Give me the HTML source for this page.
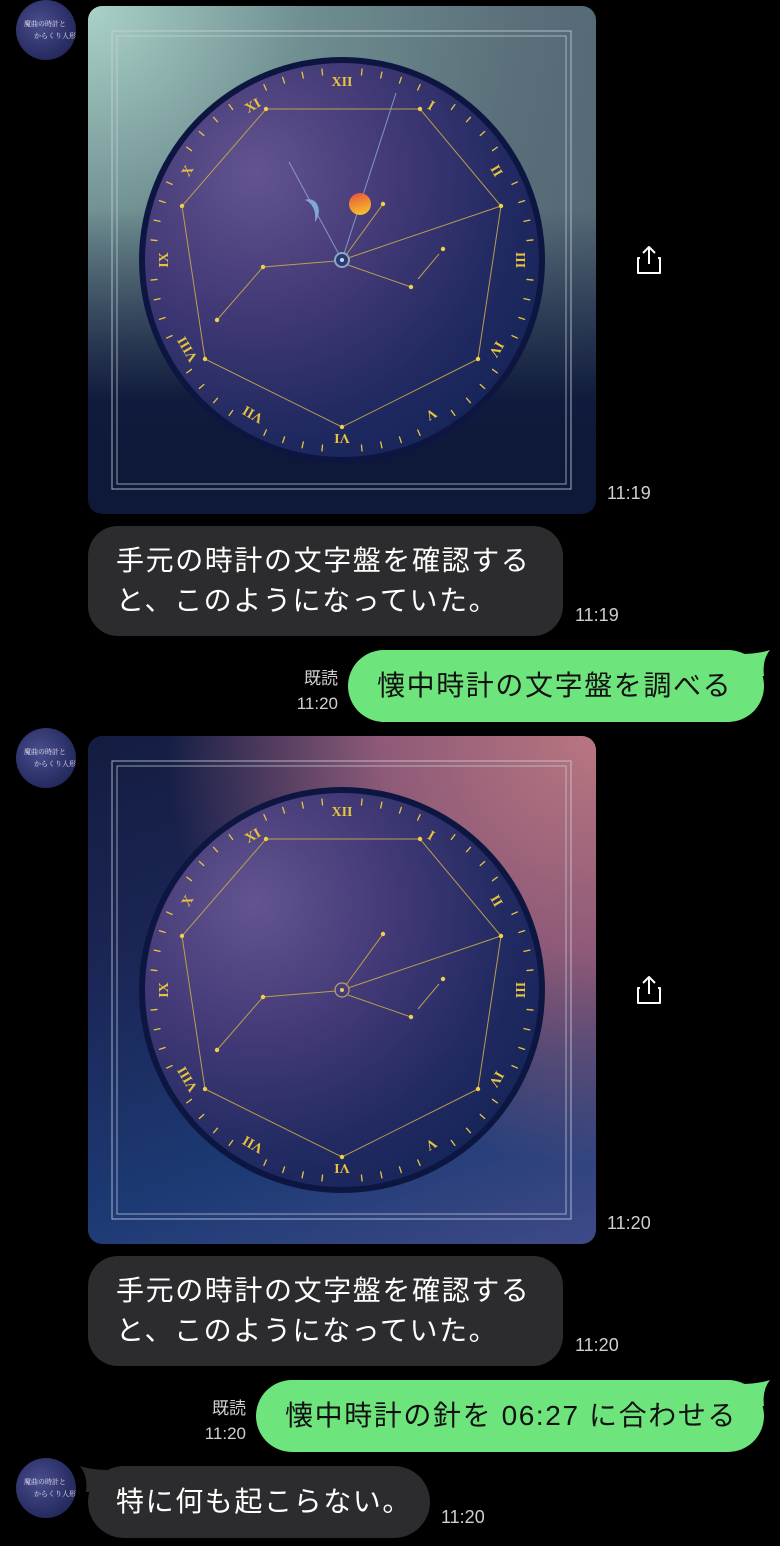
<!DOCTYPE html>
<html><head><meta charset="utf-8">
<style>
body{margin:0;width:780px;height:1546px;background:#000;position:relative;overflow:hidden;font-family:"Liberation Sans","Noto Sans CJK JP",sans-serif;}
.av{position:absolute;left:16px;width:60px;height:60px;border-radius:50%;background:radial-gradient(circle at 40% 40%,#4a4f8e,#2a2f66 60%,#1a1d48);overflow:hidden}
.av span{position:absolute;color:#e8e0f0;font-size:7px;line-height:9px;font-family:"Noto Serif CJK SC",serif;white-space:nowrap}
.img{position:absolute;left:88px;width:508px;height:508px;border-radius:14px;overflow:hidden}
.ts{position:absolute;color:#cfcfcf;font-size:18px}
.gb{position:absolute;background:#2c2c2e;color:#fff;font-size:28px;border-radius:30px;line-height:40px;letter-spacing:1.6px}
.grn{position:absolute;background:#6ee57c;color:#111;font-size:28px;border-radius:36px;height:72px;line-height:72px;letter-spacing:1.6px}
.rd{position:absolute;color:#cfcfcf;font-size:17px;text-align:right;line-height:25px}
.share{position:absolute;left:634px;width:30px;height:32px}
</style></head><body>

<div class="av" style="top:0"><span style="left:8px;top:20px">魔曲の時計と</span><span style="left:18px;top:32px">からくり人形</span></div>
<div class="av" style="top:728px"><span style="left:8px;top:20px">魔曲の時計と</span><span style="left:18px;top:32px">からくり人形</span></div>
<div class="av" style="top:1458px"><span style="left:8px;top:20px">魔曲の時計と</span><span style="left:18px;top:32px">からくり人形</span></div>

<svg width="0" height="0" style="position:absolute">
<defs>
<radialGradient id="face" cx="28%" cy="28%" r="85%">
<stop offset="0" stop-color="#63548f"/><stop offset="0.4" stop-color="#433a77"/><stop offset="0.75" stop-color="#222a62"/><stop offset="1" stop-color="#142458"/>
</radialGradient>
<linearGradient id="sun" x1="0.2" y1="0" x2="0.5" y2="1"><stop offset="0" stop-color="#e8553a"/><stop offset="1" stop-color="#f6c02a"/></linearGradient>
<g id="dial">
<circle r="203" fill="#0d1640"/>
<circle r="197" fill="url(#face)"/>
<g stroke="#e8c43e" stroke-width="1.3" stroke-linecap="round">
<line x1="0" y1="-192" x2="0" y2="-186" transform="rotate(6)"/><line x1="0" y1="-192" x2="0" y2="-186" transform="rotate(12)"/><line x1="0" y1="-192" x2="0" y2="-186" transform="rotate(18)"/><line x1="0" y1="-192" x2="0" y2="-186" transform="rotate(24)"/>
<line x1="0" y1="-192" x2="0" y2="-186" transform="rotate(36)"/><line x1="0" y1="-192" x2="0" y2="-186" transform="rotate(42)"/><line x1="0" y1="-192" x2="0" y2="-186" transform="rotate(48)"/><line x1="0" y1="-192" x2="0" y2="-186" transform="rotate(54)"/>
<line x1="0" y1="-192" x2="0" y2="-186" transform="rotate(66)"/><line x1="0" y1="-192" x2="0" y2="-186" transform="rotate(72)"/><line x1="0" y1="-192" x2="0" y2="-186" transform="rotate(78)"/><line x1="0" y1="-192" x2="0" y2="-186" transform="rotate(84)"/>
<line x1="0" y1="-192" x2="0" y2="-186" transform="rotate(96)"/><line x1="0" y1="-192" x2="0" y2="-186" transform="rotate(102)"/><line x1="0" y1="-192" x2="0" y2="-186" transform="rotate(108)"/><line x1="0" y1="-192" x2="0" y2="-186" transform="rotate(114)"/>
<line x1="0" y1="-192" x2="0" y2="-186" transform="rotate(126)"/><line x1="0" y1="-192" x2="0" y2="-186" transform="rotate(132)"/><line x1="0" y1="-192" x2="0" y2="-186" transform="rotate(138)"/><line x1="0" y1="-192" x2="0" y2="-186" transform="rotate(144)"/>
<line x1="0" y1="-192" x2="0" y2="-186" transform="rotate(156)"/><line x1="0" y1="-192" x2="0" y2="-186" transform="rotate(162)"/><line x1="0" y1="-192" x2="0" y2="-186" transform="rotate(168)"/><line x1="0" y1="-192" x2="0" y2="-186" transform="rotate(174)"/>
<line x1="0" y1="-192" x2="0" y2="-186" transform="rotate(186)"/><line x1="0" y1="-192" x2="0" y2="-186" transform="rotate(192)"/><line x1="0" y1="-192" x2="0" y2="-186" transform="rotate(198)"/><line x1="0" y1="-192" x2="0" y2="-186" transform="rotate(204)"/>
<line x1="0" y1="-192" x2="0" y2="-186" transform="rotate(216)"/><line x1="0" y1="-192" x2="0" y2="-186" transform="rotate(222)"/><line x1="0" y1="-192" x2="0" y2="-186" transform="rotate(228)"/><line x1="0" y1="-192" x2="0" y2="-186" transform="rotate(234)"/>
<line x1="0" y1="-192" x2="0" y2="-186" transform="rotate(246)"/><line x1="0" y1="-192" x2="0" y2="-186" transform="rotate(252)"/><line x1="0" y1="-192" x2="0" y2="-186" transform="rotate(258)"/><line x1="0" y1="-192" x2="0" y2="-186" transform="rotate(264)"/>
<line x1="0" y1="-192" x2="0" y2="-186" transform="rotate(276)"/><line x1="0" y1="-192" x2="0" y2="-186" transform="rotate(282)"/><line x1="0" y1="-192" x2="0" y2="-186" transform="rotate(288)"/><line x1="0" y1="-192" x2="0" y2="-186" transform="rotate(294)"/>
<line x1="0" y1="-192" x2="0" y2="-186" transform="rotate(306)"/><line x1="0" y1="-192" x2="0" y2="-186" transform="rotate(312)"/><line x1="0" y1="-192" x2="0" y2="-186" transform="rotate(318)"/><line x1="0" y1="-192" x2="0" y2="-186" transform="rotate(324)"/>
<line x1="0" y1="-192" x2="0" y2="-186" transform="rotate(336)"/><line x1="0" y1="-192" x2="0" y2="-186" transform="rotate(342)"/><line x1="0" y1="-192" x2="0" y2="-186" transform="rotate(348)"/><line x1="0" y1="-192" x2="0" y2="-186" transform="rotate(354)"/>
</g>
<g fill="#e8c43e" font-family="Liberation Serif,serif" font-weight="bold" font-size="14" text-anchor="middle">
<text transform="rotate(0) translate(0,-174)">XII</text>
<text transform="rotate(30) translate(0,-174)">I</text>
<text transform="rotate(60) translate(0,-174)">II</text>
<text transform="rotate(90) translate(0,-174)">III</text>
<text transform="rotate(120) translate(0,-174)">IV</text>
<text transform="rotate(150) translate(0,-174)">V</text>
<text transform="rotate(180) translate(0,-174)">VI</text>
<text transform="rotate(210) translate(0,-174)">VII</text>
<text transform="rotate(240) translate(0,-174)">VIII</text>
<text transform="rotate(270) translate(0,-174)">IX</text>
<text transform="rotate(300) translate(0,-174)">X</text>
<text transform="rotate(330) translate(0,-174)">XI</text>
</g>
<g stroke="#c9a84a" stroke-width="1" fill="none" opacity="0.9">
<polygon points="-76,-151 78,-151 159,-54 136,99 0,167 -137,99 -160,-54"/>
<line x1="-6" y1="1" x2="-79" y2="7"/><line x1="-79" y1="7" x2="-125" y2="60"/>
<line x1="6" y1="5" x2="69" y2="27"/><line x1="76" y1="19" x2="97" y2="-6"/>
<line x1="4" y1="-5" x2="41" y2="-56"/><line x1="6" y1="-2" x2="159" y2="-54"/>
</g>
<g fill="#f0cf4a">
<circle cx="-76" cy="-151" r="2.2"/><circle cx="78" cy="-151" r="2.2"/><circle cx="159" cy="-54" r="2.2"/><circle cx="136" cy="99" r="2.2"/><circle cx="0" cy="167" r="2.2"/><circle cx="-137" cy="99" r="2.2"/><circle cx="-160" cy="-54" r="2.2"/>
<circle cx="-79" cy="7" r="2.2"/><circle cx="-125" cy="60" r="2.2"/><circle cx="69" cy="27" r="2.2"/><circle cx="101" cy="-11" r="2.2"/><circle cx="41" cy="-56" r="2.2"/>
</g>
</g>
</defs></svg>

<!-- image 1 -->
<div class="img" style="top:6px;background:linear-gradient(180deg,rgba(0,0,0,0) 0%,rgba(0,0,0,0) 40%,#0f1a3c 78%,#0e1838 100%),radial-gradient(circle at 0% 0%,#aad2c8 0%,#6f8f91 30%,#5a6f7a 60%,#4c5f70 100%)">
<svg width="508" height="508" style="position:absolute;left:0;top:0">
<rect x="24" y="25" width="459" height="458" fill="none" stroke="#c9d2da" stroke-width="1" opacity="0.8"/>
<rect x="29" y="30" width="449" height="448" fill="none" stroke="#c9d2da" stroke-width="1" opacity="0.7"/>
<g transform="translate(254,254)">
<use href="#dial"/>
<g stroke="#8fa6d0" stroke-width="1" opacity="0.85">
<line x1="0" y1="0" x2="-53" y2="-98"/>
<line x1="0" y1="0" x2="54" y2="-167"/>
</g>
<path d="M-37,-60 C-26,-64 -18,-50 -27,-38 C-26,-48 -28,-56 -37,-60Z" fill="#7fa8d6"/>
<circle cx="18" cy="-56" r="11" fill="url(#sun)"/>
<circle r="7" fill="#2a3a72" stroke="#8fa6c8" stroke-width="2"/>
<circle r="2" fill="#c8d4ea"/>
</g>
</svg>
</div>

<div class="ts" style="left:607px;top:483px">11:19</div>
<svg class="share" style="top:244px" viewBox="0 0 30 32"><path d="M15 3 V20 M9 9 L15 3 L21 9 M6 14 H4 V29 H26 V14 H24" fill="none" stroke="#fff" stroke-width="2" stroke-linejoin="round"/></svg>

<div class="gb" style="left:88px;top:526px;width:475px;height:110px;"><div style="padding:15px 0 0 28px">手元の時計の文字盤を確認する<br>と、このようになっていた。</div></div>
<div class="ts" style="left:575px;top:605px">11:19</div>

<div class="rd" style="left:280px;top:666px;width:58px">既読<br>11:20</div>
<div class="grn" style="left:348px;top:650px;width:416px;"><span style="padding-left:29px">懐中時計の文字盤を調べる</span></div>
<svg style="position:absolute;left:740px;top:650px" width="30" height="30"><path d="M0 4 Q18 4 30 0 Q22 10 24 26 L8 26Z" fill="#6ee57c"/></svg>

<!-- image 2 -->
<div class="img" style="top:736px;background:radial-gradient(circle at 100% 0%,#b87680 0%,#8e5a78 30%,rgba(90,70,120,0) 60%),linear-gradient(160deg,#141c40 0%,#1b2656 35%,#1c3a74 70%,#3f4a88 100%)">
<svg width="508" height="508" style="position:absolute;left:0;top:0">
<rect x="24" y="25" width="459" height="458" fill="none" stroke="#c9d2da" stroke-width="1" opacity="0.8"/>
<rect x="29" y="30" width="449" height="448" fill="none" stroke="#c9d2da" stroke-width="1" opacity="0.7"/>
<g transform="translate(254,254)">
<use href="#dial"/>
<circle r="7" fill="none" stroke="#b8a070" stroke-width="1.2"/>
<circle r="2" fill="#e0c870"/>
</g>
</svg>
</div>

<div class="ts" style="left:607px;top:1213px">11:20</div>
<svg class="share" style="top:974px" viewBox="0 0 30 32"><path d="M15 3 V20 M9 9 L15 3 L21 9 M6 14 H4 V29 H26 V14 H24" fill="none" stroke="#fff" stroke-width="2" stroke-linejoin="round"/></svg>

<div class="gb" style="left:88px;top:1256px;width:475px;height:110px;"><div style="padding:15px 0 0 28px">手元の時計の文字盤を確認する<br>と、このようになっていた。</div></div>
<div class="ts" style="left:575px;top:1335px">11:20</div>

<div class="rd" style="left:188px;top:1396px;width:58px">既読<br>11:20</div>
<div class="grn" style="left:256px;top:1380px;width:508px;"><span style="padding-left:29px">懐中時計の針を 06:27 に合わせる</span></div>
<svg style="position:absolute;left:740px;top:1380px" width="30" height="30"><path d="M0 4 Q18 4 30 0 Q22 10 24 26 L8 26Z" fill="#6ee57c"/></svg>

<svg style="position:absolute;left:80px;top:1466px" width="30" height="30"><path d="M30 4 Q12 4 0 0 Q8 10 6 26 L22 26Z" fill="#2c2c2e"/></svg>
<div class="gb" style="left:88px;top:1466px;width:342px;height:72px;border-radius:36px;line-height:72px"><span style="padding-left:28px">特に何も起こらない。</span></div>
<div class="ts" style="left:441px;top:1507px">11:20</div>

</body></html>
